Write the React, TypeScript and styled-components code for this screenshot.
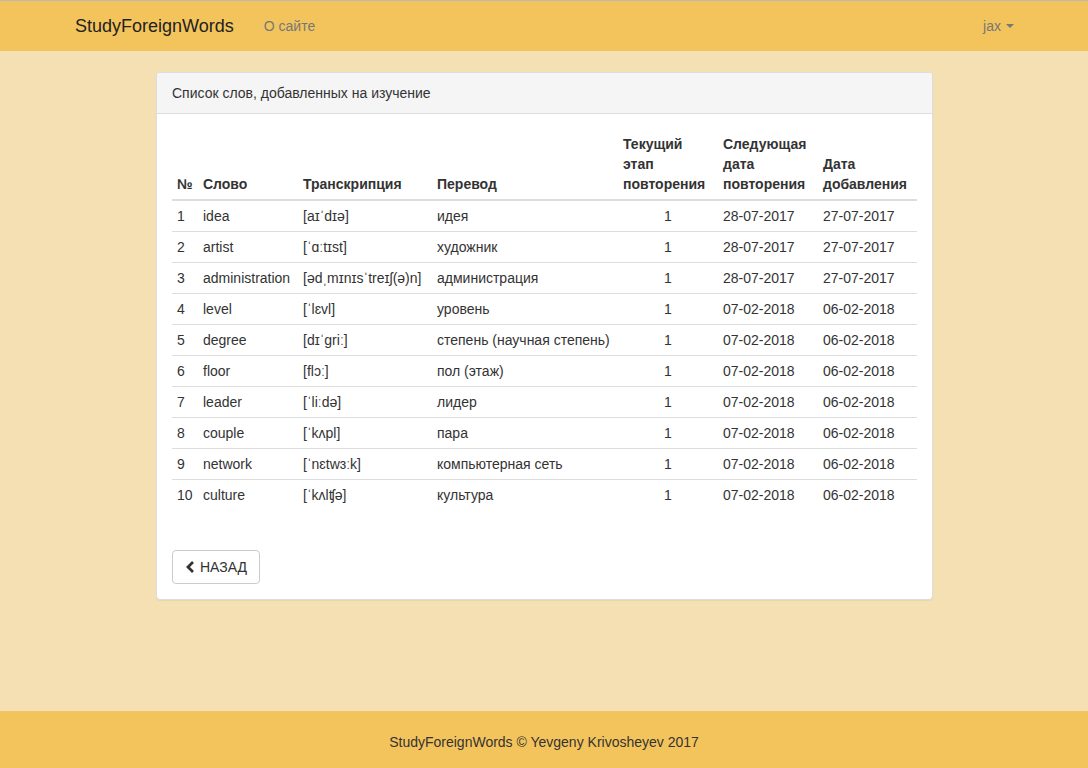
import React from "react";
import styled, { createGlobalStyle } from "styled-components";

const Global = createGlobalStyle`
  html, body { margin: 0; padding: 0; }
  body {
    background: #f5e0b3;
    font-family: "Liberation Sans", Arial, Helvetica, sans-serif;
    font-size: 14px;
    line-height: 20px;
    color: #333;
  }
  * { box-sizing: border-box; }
`;

const Page = styled.div`
  min-height: 768px;
  display: flex;
  flex-direction: column;
`;

const Navbar = styled.nav`
  height: 51px;
  background: #f4c45c;
  border-top: 1px solid #b9b9b9;
  flex-shrink: 0;
`;

const NavInner = styled.div`
  width: 970px;
  margin: 0 auto;
  padding: 0 15px;
  height: 49px;
  display: flex;
  align-items: center;
`;

const Brand = styled.a`
  font-size: 18px;
  line-height: 20px;
  color: #222;
  text-decoration: none;
  margin-left: 1px;
`;

const NavLink = styled.a<{ $right?: boolean }>`
  color: #777;
  text-decoration: none;
  font-size: 14px;
  margin-left: ${(p) => (p.$right ? "auto" : "30px")};
  display: flex;
  align-items: center;
  gap: 5px;
`;

const Caret = styled.span`
  display: inline-block;
  width: 0;
  height: 0;
  border-top: 4px solid #777;
  border-left: 4px solid transparent;
  border-right: 4px solid transparent;
  margin-top: 1px;
`;

const Main = styled.main`
  flex: 1;
  padding-top: 21px;
`;

const Panel = styled.section`
  width: 777px;
  margin-left: calc(50% - 388px);
  background: #fff;
  border: 1px solid #ddd;
  border-radius: 4px;
  box-shadow: 0 1px 1px rgba(0, 0, 0, 0.05);
`;

const PanelHeading = styled.div`
  background: #f5f5f5;
  border-bottom: 1px solid #ddd;
  padding: 10px 15px;
  border-radius: 3px 3px 0 0;
`;

const PanelBody = styled.div`
  padding: 15px;
`;

const Table = styled.table`
  width: 100%;
  border-collapse: collapse;
  margin-bottom: 40px;
`;

const Th = styled.th<{ $w?: number }>`
  text-align: left;
  vertical-align: bottom;
  padding: 5px;
  border-bottom: 2px solid #ddd;
  font-weight: bold;
  width: ${(p) => (p.$w ? `${p.$w}px` : "auto")};
`;

const Td = styled.td<{ $center?: boolean }>`
  padding: 5px;
  border-top: 1px solid #ddd;
  text-align: ${(p) => (p.$center ? "center" : "left")};
  white-space: nowrap;
`;

const Button = styled.button`
  display: inline-flex;
  align-items: center;
  gap: 4px;
  height: 34px;
  padding: 6px 12px;
  background: #fff;
  border: 1px solid #ccc;
  border-radius: 4px;
  font-family: inherit;
  font-size: 14px;
  color: #333;
  cursor: pointer;
`;

const Footer = styled.footer`
  height: 57px;
  background: #f4c45c;
  display: flex;
  align-items: center;
  justify-content: center;
  padding-top: 4px;
  flex-shrink: 0;
`;

const rows = [
  ["1", "idea", "[aɪˈdɪə]", "идея", "1", "28-07-2017", "27-07-2017"],
  ["2", "artist", "[ˈɑːtɪst]", "художник", "1", "28-07-2017", "27-07-2017"],
  ["3", "administration", "[ədˌmɪnɪsˈtreɪʃ(ə)n]", "администрация", "1", "28-07-2017", "27-07-2017"],
  ["4", "level", "[ˈlɛvl]", "уровень", "1", "07-02-2018", "06-02-2018"],
  ["5", "degree", "[dɪˈgriː]", "степень (научная степень)", "1", "07-02-2018", "06-02-2018"],
  ["6", "floor", "[flɔː]", "пол (этаж)", "1", "07-02-2018", "06-02-2018"],
  ["7", "leader", "[ˈliːdə]", "лидер", "1", "07-02-2018", "06-02-2018"],
  ["8", "couple", "[ˈkʌpl]", "пара", "1", "07-02-2018", "06-02-2018"],
  ["9", "network", "[ˈnɛtwɜːk]", "компьютерная сеть", "1", "07-02-2018", "06-02-2018"],
  ["10", "culture", "[ˈkʌlʧə]", "культура", "1", "07-02-2018", "06-02-2018"],
];

const Chevron = () => (
  <svg width="11" height="12" viewBox="0 0 11 12">
    <path d="M8 1 L3 6 L8 11" fill="none" stroke="#333" strokeWidth="2.8" strokeLinejoin="miter" />
  </svg>
);

export default function App() {
  return (
    <Page>
      <Global />
      <Navbar>
        <NavInner>
          <Brand href="#">StudyForeignWords</Brand>
          <NavLink href="#">О сайте</NavLink>
          <NavLink href="#" $right>
            jax <Caret />
          </NavLink>
        </NavInner>
      </Navbar>
      <Main>
        <Panel>
          <PanelHeading>Список слов, добавленных на изучение</PanelHeading>
          <PanelBody>
            <Table>
              <thead>
                <tr>
                  <Th $w={26}>№</Th>
                  <Th $w={100}>Слово</Th>
                  <Th $w={134}>Транскрипция</Th>
                  <Th $w={186}>Перевод</Th>
                  <Th $w={100}>Текущий этап повторения</Th>
                  <Th $w={100}>Следующая дата повторения</Th>
                  <Th>Дата добавления</Th>
                </tr>
              </thead>
              <tbody>
                {rows.map((r) => (
                  <tr key={r[0]}>
                    {r.map((c, i) => (
                      <Td key={i} $center={i === 4}>
                        {c}
                      </Td>
                    ))}
                  </tr>
                ))}
              </tbody>
            </Table>
            <Button>
              <Chevron />
              НАЗАД
            </Button>
          </PanelBody>
        </Panel>
      </Main>
      <Footer>StudyForeignWords © Yevgeny Krivosheyev 2017</Footer>
    </Page>
  );
}
